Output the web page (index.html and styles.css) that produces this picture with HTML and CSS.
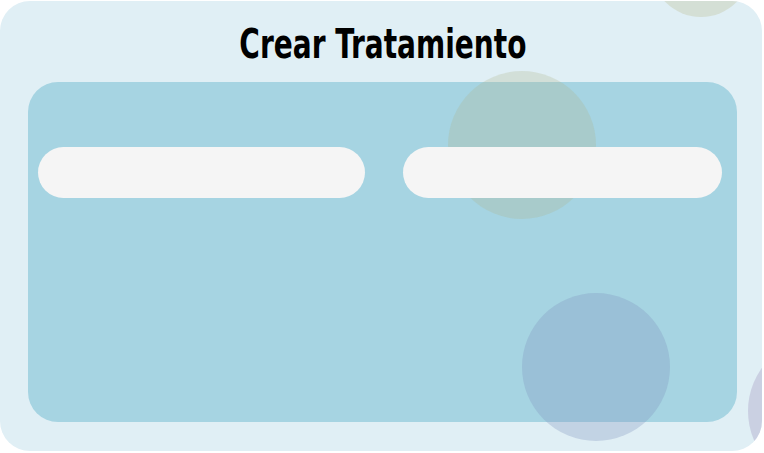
FILE: index.html
```html
<!DOCTYPE html>
<html lang="es">
<head>
    <meta charset="UTF-8">
    <meta name="viewport" content="width=device-width, initial-scale=1.0">
    <title>Crear Tratamiento</title>
    <link rel="stylesheet" href="styles.css">
</head>
<body>

<div class="card">
    <span class="burbuja burbuja-arriba"></span>
    <span class="burbuja burbuja-centro"></span>
    <span class="burbuja burbuja-abajo"></span>
    <span class="burbuja burbuja-lado"></span>

    <h1><span class="titulo">Crear Tratamiento</span></h1>

    <form class="panel">
        <div class="fila">
            <input type="text" class="campo">
            <input type="text" class="campo">
        </div>
    </form>
</div>

</body>
</html>
```

FILE: styles.css
```css
body {
    margin: 0;
    padding: 0;
    background-color: #fff;
    font-family: 'DejaVu Sans', sans-serif;
}

.card {
    position: relative;
    overflow: hidden;
    box-sizing: border-box;
    width: 762px;
    height: 450px;
    margin-top: 1px;
    padding: 20px 25px 28px 28px;
    background-color: #e0eff5;
    border-radius: 30px;
}

h1 {
    margin: 0 0 14px 0;
    height: 47px;
    text-align: center;
    font-family: 'DejaVu Sans Condensed', 'DejaVu Sans', sans-serif;
    font-stretch: condensed;
    font-weight: bold;
    font-size: 41px;
    line-height: 47px;
    color: #000;
}

.titulo {
    display: inline-block;
    transform: scaleX(0.76);
    position: relative;
    z-index: 0;
}

.panel {
    height: 340px;
    margin: 0;
    padding: 65px 15px 0 10px;
    box-sizing: border-box;
    background-color: #a6d4e2;
    border-radius: 30px;
}

.fila {
    display: flex;
    gap: 38px;
}

.campo {
    position: relative;
    z-index: 2;
    flex-shrink: 0;
    height: 51px;
    border: none;
    border-radius: 26px;
    background-color: #f5f5f5;
    outline: none;
    padding: 0 20px;
    box-sizing: border-box;
}

.campo:first-child {
    width: 327px;
}

.campo:last-child {
    width: 319px;
}

.burbuja {
    position: absolute;
    z-index: 1;
    border-radius: 50%;
}

.burbuja-arriba {
    left: 651px;
    top: -84px;
    width: 100px;
    height: 100px;
    background-color: rgba(185, 185, 140, 0.3);
}

.burbuja-centro {
    left: 448px;
    top: 70px;
    width: 148px;
    height: 148px;
    background-color: rgba(175, 180, 140, 0.27);
}

.burbuja-abajo {
    left: 522px;
    top: 292px;
    width: 148px;
    height: 148px;
    background-color: rgba(125, 145, 190, 0.3);
}

.burbuja-lado {
    left: 748px;
    top: 336px;
    width: 148px;
    height: 148px;
    background-color: rgba(175, 170, 205, 0.45);
}
```
